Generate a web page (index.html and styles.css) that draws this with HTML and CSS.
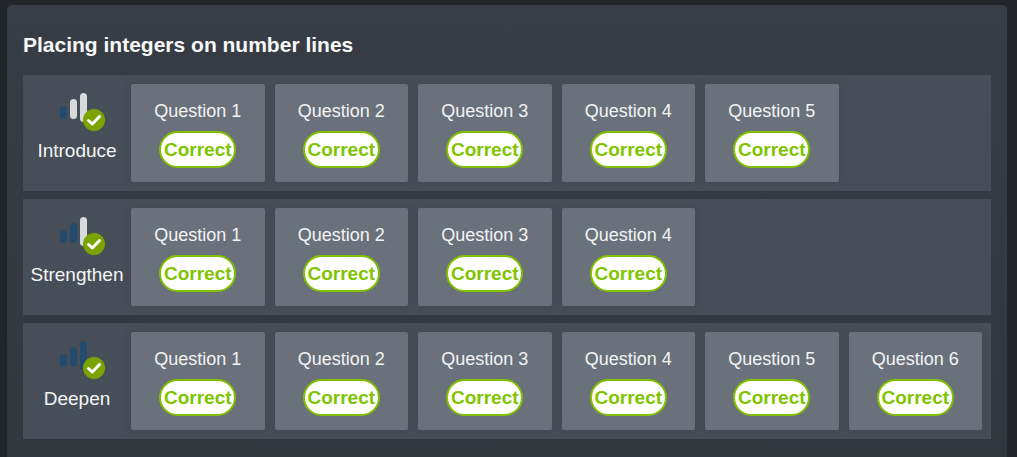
FILE: index.html
```html
<!DOCTYPE html>
<html lang="en">
<head>
<meta charset="UTF-8" />
<title>Placing integers on number lines</title>
<link rel="stylesheet" href="styles.css">
</head>
<body>

<div class="panel">
  <h2>Placing integers on number lines</h2>

  <div class="row">
    <div class="level">
      <svg class="level-icon" width="46" height="40" viewBox="0 0 46 40">
        <rect class="bar-on" x="1" y="14" width="7" height="13" rx="3.5" />
        <rect class="bar-off" x="11" y="7" width="7" height="20" rx="3.5" />
        <rect class="bar-off" x="21" y="1" width="7" height="29" rx="3.5" />
        <circle class="tick-bg" cx="35" cy="28" r="11" />
        <path class="tick" d="M29.500 28.500 L33.300 32 L40.500 24.500" />
      </svg>
      <span>Introduce</span>
    </div>
    <div class="questions">
      <div class="card"><p>Question 1</p><div class="pill">Correct</div></div>
      <div class="card"><p>Question 2</p><div class="pill">Correct</div></div>
      <div class="card"><p>Question 3</p><div class="pill">Correct</div></div>
      <div class="card"><p>Question 4</p><div class="pill">Correct</div></div>
      <div class="card"><p>Question 5</p><div class="pill">Correct</div></div>
    </div>
  </div>

  <div class="row">
    <div class="level">
      <svg class="level-icon" width="46" height="40" viewBox="0 0 46 40">
        <rect class="bar-on" x="1" y="14" width="7" height="13" rx="3.5" />
        <rect class="bar-on" x="11" y="7" width="7" height="20" rx="3.5" />
        <rect class="bar-off" x="21" y="1" width="7" height="29" rx="3.5" />
        <circle class="tick-bg" cx="35" cy="28" r="11" />
        <path class="tick" d="M29.500 28.500 L33.300 32 L40.500 24.500" />
      </svg>
      <span>Strengthen</span>
    </div>
    <div class="questions">
      <div class="card"><p>Question 1</p><div class="pill">Correct</div></div>
      <div class="card"><p>Question 2</p><div class="pill">Correct</div></div>
      <div class="card"><p>Question 3</p><div class="pill">Correct</div></div>
      <div class="card"><p>Question 4</p><div class="pill">Correct</div></div>
    </div>
  </div>

  <div class="row">
    <div class="level">
      <svg class="level-icon" width="46" height="40" viewBox="0 0 46 40">
        <rect class="bar-on" x="1" y="14" width="7" height="13" rx="3.5" />
        <rect class="bar-on" x="11" y="7" width="7" height="20" rx="3.5" />
        <rect class="bar-on" x="21" y="1" width="7" height="29" rx="3.5" />
        <circle class="tick-bg" cx="35" cy="28" r="11" />
        <path class="tick" d="M29.500 28.500 L33.300 32 L40.500 24.500" />
      </svg>
      <span>Deepen</span>
    </div>
    <div class="questions">
      <div class="card"><p>Question 1</p><div class="pill">Correct</div></div>
      <div class="card"><p>Question 2</p><div class="pill">Correct</div></div>
      <div class="card"><p>Question 3</p><div class="pill">Correct</div></div>
      <div class="card"><p>Question 4</p><div class="pill">Correct</div></div>
      <div class="card"><p>Question 5</p><div class="pill">Correct</div></div>
      <div class="card"><p>Question 6</p><div class="pill">Correct</div></div>
    </div>
  </div>
</div>

</body>
</html>
```

FILE: styles.css
```css
html, body { height: 100%; }
body {
  margin: 0;
  padding: 5px 10px 0 7px;
  box-sizing: border-box;
  overflow: hidden;
  background: #22252a;
  font-family: "Liberation Sans Narrow", "Liberation Sans", sans-serif;
  color: #fff;
}
.panel {
  height: 460px;
  padding: 0 16px;
  box-sizing: border-box;
  background: linear-gradient(#383d45, #32363d);
  border-radius: 5px;
}
h2 {
  margin: 0;
  padding: 28px 0 0;
  height: 70px;
  box-sizing: border-box;
  font-size: 21px;
  line-height: 24px;
  font-weight: bold;
  color: #f7f8f8;
}
.row {
  display: flex;
  height: 116px;
  margin-bottom: 8px;
  padding: 9px 9px 9px 0;
  box-sizing: border-box;
  background: #484e57;
}
.level {
  flex: none;
  width: 108px;
  display: flex;
  flex-direction: column;
  align-items: center;
  font-size: 19px;
  line-height: 24px;
  color: #f4f5f6;
}
.level-icon { display: block; margin: 8px 0 7px 10px; }
.bar-on { fill: #234b6e; }
.bar-off { fill: #d8d9da; }
.tick-bg { fill: #7ba300; }
.tick { fill: none; stroke: #fff; stroke-width: 3; stroke-linecap: round; stroke-linejoin: round; }
.questions {
  flex: 1;
  display: grid;
  grid-template-columns: repeat(6, 1fr);
  gap: 10px;
}
.card {
  display: flex;
  flex-direction: column;
  align-items: center;
  background: #6a717b;
  border-radius: 2px;
  box-shadow: 0 0 8px rgba(50, 54, 61, 0.3);
}
.card p {
  margin: 15px 0 8px;
  font-size: 18px;
  line-height: 24px;
  color: #f2f3f4;
}
.pill {
  width: 77px;
  height: 37px;
  box-sizing: border-box;
  border: 2px solid #80c000;
  border-radius: 19px;
  background: #fff;
  color: #80c400;
  font-size: 19px;
  font-weight: bold;
  line-height: 33px;
  text-align: center;
}
```
